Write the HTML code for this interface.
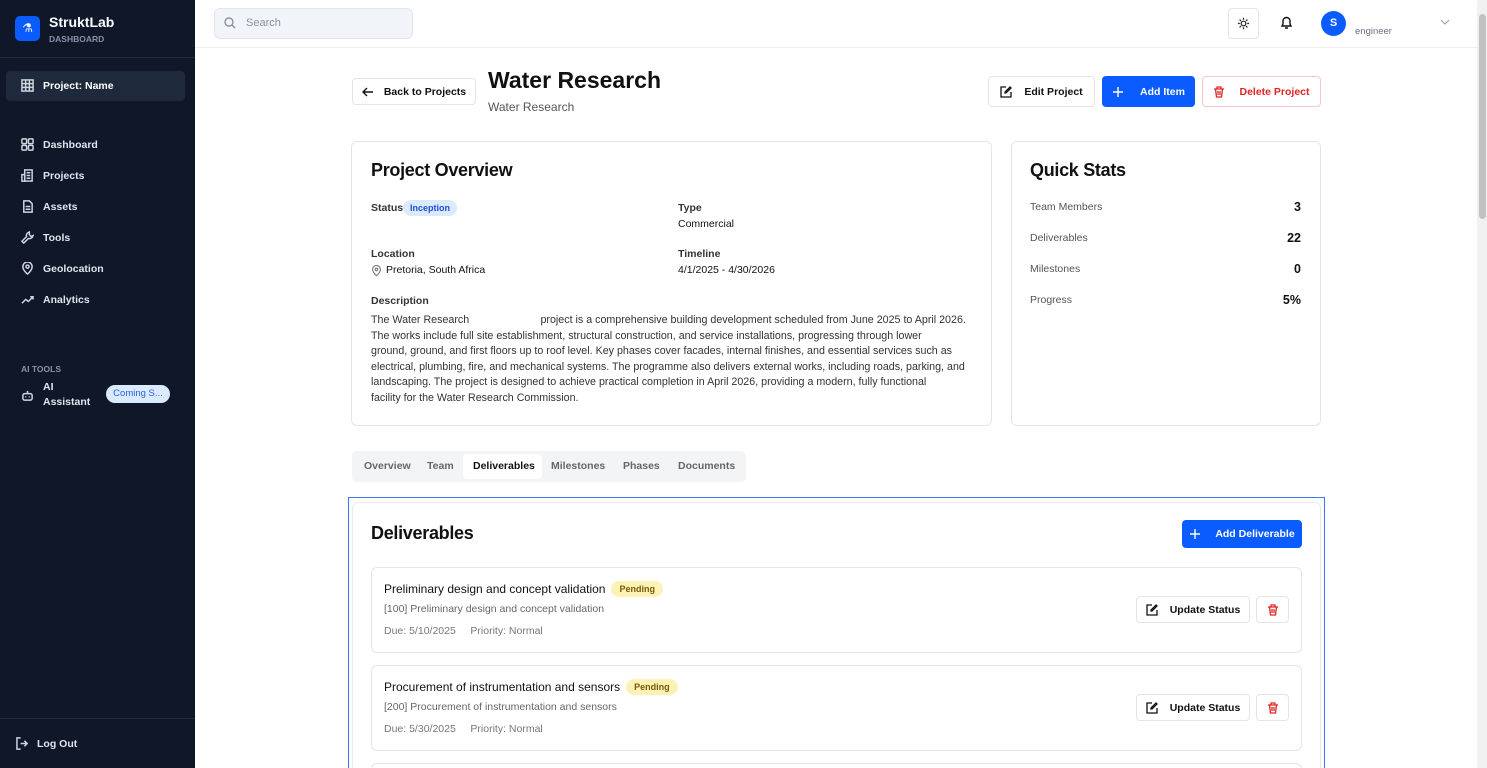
<!DOCTYPE html>
<html style="width:1487px;height:768px;overflow:hidden"><head><meta charset="utf-8"><style>
*{box-sizing:border-box;margin:0;padding:0}
body{width:1487px;height:768px;overflow:hidden;font-family:"Liberation Sans",Arial,sans-serif;background:#fff;position:relative;color:#111}
.sb{position:absolute;left:0;top:0;width:195px;height:768px;background:#0f1729;color:#e5e9f0}
.abs{position:absolute}
.nav{position:absolute;left:21px;font-size:10.5px;font-weight:bold;color:#dfe4ec;display:flex;align-items:center;gap:9px}
.nav svg{width:13px;height:13px}
.btn{position:absolute;border:1px solid #e2e4e8;border-radius:4px;background:#fff;font-size:10.5px;font-weight:bold;display:flex;align-items:center;justify-content:center;gap:12px}
.btn svg{width:12px;height:12px}
.card{position:absolute;border:1px solid #e3e5e8;border-radius:6px;background:#fff}
.lab{font-size:10.5px;font-weight:bold;color:#333;position:absolute}
.val{font-size:10.5px;color:#111;position:absolute}
.row{position:absolute;left:371px;width:931px;height:86px;border:1px solid #e3e5e8;border-radius:6px}
.pend{display:inline-block;background:#fdf2b5;color:#7a5a06;font-size:9px;font-weight:bold;padding:3px 8px;border-radius:9px;margin-left:6px;vertical-align:1px}
</style></head><body>
<div class="sb">
 <div class="abs" style="left:15px;top:16px;width:25px;height:25px;background:#0a5cff;border-radius:5px;color:#fff;font-size:12px;text-align:center;line-height:25px">⚗</div>
 <div class="abs" style="left:49px;top:14px;font-size:14px;font-weight:bold;color:#fff">StruktLab</div>
 <div class="abs" style="left:49px;top:34px;font-size:8.5px;font-weight:bold;color:#8793a8">DASHBOARD</div>
 <div class="abs" style="left:0;top:57px;width:195px;height:1px;background:#1f2a3d"></div>
 <div class="abs" style="left:6px;top:71px;width:179px;height:30px;background:#1e293b;border-radius:4px"></div>
 <div class="nav" style="top:79px"><svg viewBox="0 0 14 14" fill="none" stroke="#cfd5df" stroke-width="1.6"><rect x="1" y="1" width="12" height="12"/><path d="M1 5h12M1 9h12M5 1v12M9 1v12"/></svg><span style="color:#fff">Project: Name</span></div>
 <div class="nav" style="top:138px"><svg viewBox="0 0 14 14" fill="none" stroke="#cfd5df" stroke-width="1.6"><rect x="1" y="1" width="5" height="5" rx="1"/><rect x="8" y="1" width="5" height="5" rx="1"/><rect x="1" y="8" width="5" height="5" rx="1"/><rect x="8" y="8" width="5" height="5" rx="1"/></svg>Dashboard</div>
 <div class="nav" style="top:169px"><svg viewBox="0 0 14 14" fill="none" stroke="#cfd5df" stroke-width="1.6"><rect x="4" y="1" width="8" height="12"/><path d="M1 6h3v7H1zM6 4h4M6 7h4M6 10h4"/></svg>Projects</div>
 <div class="nav" style="top:200px"><svg viewBox="0 0 14 14" fill="none" stroke="#cfd5df" stroke-width="1.6"><path d="M3 1h6l3 3v9H3zM5 7h5M5 10h5"/></svg>Assets</div>
 <div class="nav" style="top:231px"><svg viewBox="0 0 14 14" fill="none" stroke="#cfd5df" stroke-width="1.6"><path d="M9 1a4 4 0 0 0-3 5L1 11l2 2 5-5a4 4 0 0 0 5-3l-2 1-2-2z"/></svg>Tools</div>
 <div class="nav" style="top:262px"><svg viewBox="0 0 14 14" fill="none" stroke="#cfd5df" stroke-width="1.6"><path d="M7 13s5-4 5-8a5 5 0 0 0-10 0c0 4 5 8 5 8z"/><circle cx="7" cy="5" r="1.7"/></svg>Geolocation</div>
 <div class="nav" style="top:293px"><svg viewBox="0 0 14 14" fill="none" stroke="#cfd5df" stroke-width="1.6"><path d="M1 11l4-4 3 2 5-5M10 4h3v3"/></svg>Analytics</div>
 <div class="abs" style="left:21px;top:364px;font-size:8.5px;font-weight:bold;color:#8793a8">AI TOOLS</div>
 <div class="nav" style="top:380px"><svg viewBox="0 0 14 14" fill="none" stroke="#cfd5df" stroke-width="1.6"><rect x="2" y="5" width="10" height="7" rx="2"/><path d="M7 2v3M5 8v1M9 8v1"/></svg><span style="line-height:15px">AI<br>Assistant</span></div>
 <div class="abs" style="left:106px;top:385px;width:64px;height:18px;border-radius:9px;background:#dbeafe;color:#2563eb;font-size:9.5px;line-height:18px;text-align:center">Coming S...</div>
 <div class="abs" style="left:0;top:718px;width:195px;height:1px;background:#1f2a3d"></div>
 <div class="nav" style="left:16px;top:737px;gap:8px"><svg viewBox="0 0 14 14" fill="none" stroke="#cfd5df" stroke-width="1.6"><path d="M5 1H1v12h4M9 4l3 3-3 3M12 7H5"/></svg>Log Out</div>
</div>
<div class="abs" style="left:195px;top:47px;width:1282px;height:1px;background:#eceef1"></div>
<div class="abs" style="left:214px;top:8px;width:199px;height:31px;background:#f1f4f8;border:1px solid #e2e6ec;border-radius:6px;font-size:11px;color:#8a93a0;padding:8px 0 0 31px">Search</div>
<svg class="abs" style="left:224px;top:17px" width="12" height="12" viewBox="0 0 12 12" fill="none" stroke="#8a93a0" stroke-width="1.4"><circle cx="5" cy="5" r="4"/><path d="M8 8l3 3"/></svg>
<div class="abs" style="left:1228px;top:8px;width:31px;height:31px;border:1px solid #e2e4e8;border-radius:4px"></div>
<svg class="abs" style="left:1237px;top:17px" width="13" height="13" viewBox="0 0 14 14" fill="none" stroke="#222" stroke-width="1.3"><circle cx="7" cy="7" r="2.5"/><path d="M7 1v2M7 11v2M1 7h2M11 7h2M2.8 2.8l1.4 1.4M9.8 9.8l1.4 1.4M2.8 11.2l1.4-1.4M9.8 4.2l1.4-1.4"/></svg>
<svg class="abs" style="left:1280px;top:16px" width="13" height="14" viewBox="0 0 13 14" fill="none" stroke="#111" stroke-width="1.4"><path d="M2 10h9l-1-2V5a3.5 3.5 0 0 0-7 0v3zM5 12h3"/></svg>
<div class="abs" style="left:1321px;top:11px;width:25px;height:25px;border-radius:50%;background:#0a5cff;color:#fff;font-size:11px;font-weight:bold;text-align:center;line-height:25px">S</div>
<div class="abs" style="left:1355px;top:26px;font-size:9.5px;color:#6b7280">engineer</div>
<svg class="abs" style="left:1440px;top:19px" width="10" height="7" viewBox="0 0 10 7" fill="none" stroke="#9ca3af" stroke-width="1.2"><path d="M1 1l4 4 4-4"/></svg>
<div class="abs" style="left:1477px;top:0;width:10px;height:768px;background:#f1f1f1"></div>
<div class="abs" style="left:1479px;top:14px;width:7px;height:205px;background:#c1c1c1;border-radius:4px"></div>
<div class="btn" style="left:352px;top:78px;width:124px;height:27px;gap:10px"><svg viewBox="0 0 12 12" fill="none" stroke="#111" stroke-width="1.4"><path d="M11 6H1M5 2L1 6l4 4"/></svg>Back to Projects</div>
<div class="abs" style="left:488px;top:67px;font-size:23px;font-weight:bold">Water Research</div>
<div class="abs" style="left:488px;top:100px;font-size:12px;color:#555">Water Research</div>
<div class="btn" style="left:988px;top:76px;width:107px;height:31px"><svg viewBox="0 0 12 12" fill="none" stroke="#111" stroke-width="1.3"><path d="M6 1H1v10h10V6M10 1l1 1-5 5H5V6z"/></svg>Edit Project</div>
<div class="btn" style="left:1102px;top:76px;width:93px;height:31px;background:#0a5cff;border-color:#0a5cff;color:#fff;gap:16px"><svg viewBox="0 0 12 12" fill="none" stroke="#fff" stroke-width="1.4"><path d="M6 1v10M1 6h10"/></svg>Add Item</div>
<div class="btn" style="left:1202px;top:76px;width:119px;height:31px;border-color:#f6c8c8;color:#e02424;gap:14px"><svg viewBox="0 0 12 12" fill="none" stroke="#e02424" stroke-width="1.3"><path d="M1 3h10M4 3V1h4v2M2.5 3l1 8h5l1-8M5 5v4M7 5v4"/></svg>Delete Project</div>
<div class="card" style="left:351px;top:141px;width:641px;height:285px"></div>
<div class="abs" style="left:371px;top:160px;font-size:18px;font-weight:bold;letter-spacing:-0.3px">Project Overview</div>
<div class="lab" style="left:371px;top:202px">Status</div>
<div class="abs" style="left:403px;top:200px;background:#dbeafe;color:#1d4ed8;font-size:9px;font-weight:bold;padding:3px 7px;border-radius:9px">Inception</div>
<div class="lab" style="left:678px;top:202px">Type</div>
<div class="val" style="left:678px;top:218px">Commercial</div>
<div class="lab" style="left:371px;top:248px">Location</div>
<svg class="abs" style="left:371px;top:265px" width="11" height="12" viewBox="0 0 14 14" fill="none" stroke="#777" stroke-width="1.4"><path d="M7 13s5-4 5-8a5 5 0 0 0-10 0c0 4 5 8 5 8z"/><circle cx="7" cy="5" r="1.7"/></svg>
<div class="val" style="left:386px;top:264px">Pretoria, South Africa</div>
<div class="lab" style="left:678px;top:248px">Timeline</div>
<div class="val" style="left:678px;top:264px">4/1/2025 - 4/30/2026</div>
<div class="lab" style="left:371px;top:295px">Description</div>
<div class="abs" style="left:371px;top:313px;font-size:10.7px;line-height:15.6px;color:#333;white-space:nowrap">The Water Research &nbsp;&nbsp;&nbsp;&nbsp;&nbsp;&nbsp;&nbsp;&nbsp;&nbsp;&nbsp;&nbsp;&nbsp;&nbsp;&nbsp;&nbsp;&nbsp;&nbsp;&nbsp;&nbsp;&nbsp;&nbsp;&nbsp; project is a comprehensive building development scheduled from June 2025 to April 2026.<br>The works include full site establishment, structural construction, and service installations, progressing through lower<br>ground, ground, and first floors up to roof level. Key phases cover facades, internal finishes, and essential services such as<br>electrical, plumbing, fire, and mechanical systems. The programme also delivers external works, including roads, parking, and<br>landscaping. The project is designed to achieve practical completion in April 2026, providing a modern, fully functional<br>facility for the Water Research Commission.</div>
<div class="card" style="left:1011px;top:141px;width:310px;height:285px"></div>
<div class="abs" style="left:1030px;top:160px;font-size:18px;font-weight:bold;letter-spacing:-0.3px">Quick Stats</div>
<div class="val" style="left:1030px;top:201px;color:#555">Team Members</div><div class="abs" style="left:1240px;top:200px;width:61px;text-align:right;font-size:12.5px;font-weight:bold">3</div>
<div class="val" style="left:1030px;top:232px;color:#555">Deliverables</div><div class="abs" style="left:1240px;top:231px;width:61px;text-align:right;font-size:12.5px;font-weight:bold">22</div>
<div class="val" style="left:1030px;top:263px;color:#555">Milestones</div><div class="abs" style="left:1240px;top:262px;width:61px;text-align:right;font-size:12.5px;font-weight:bold">0</div>
<div class="val" style="left:1030px;top:294px;color:#555">Progress</div><div class="abs" style="left:1240px;top:293px;width:61px;text-align:right;font-size:12.5px;font-weight:bold">5%</div>
<div class="abs" style="left:352px;top:451px;width:394px;height:31px;background:#f3f4f6;border-radius:5px"></div>
<div class="abs" style="left:463px;top:454px;width:79px;height:25px;background:#fff;border-radius:4px"></div>
<div class="abs" style="top:460px;left:364px;font-size:10.5px;color:#666;font-weight:bold">Overview</div>
<div class="abs" style="top:460px;left:427px;font-size:10.5px;color:#666;font-weight:bold">Team</div>
<div class="abs" style="top:460px;left:473px;font-size:10.5px;color:#111;font-weight:bold">Deliverables</div>
<div class="abs" style="top:460px;left:551px;font-size:10.5px;color:#666;font-weight:bold">Milestones</div>
<div class="abs" style="top:460px;left:623px;font-size:10.5px;color:#666;font-weight:bold">Phases</div>
<div class="abs" style="top:460px;left:678px;font-size:10.5px;color:#666;font-weight:bold">Documents</div>
<div class="abs" style="left:348px;top:497px;width:977px;height:271px;border:1.5px solid #3b76f0;border-bottom:none;overflow:hidden">
 <div class="abs" style="left:3px;top:4px;width:969px;height:300px;border:1px solid #e8eaed;border-radius:6px"></div>
 <div class="abs" style="left:22px;top:265px;width:931px;height:86px;border:1px solid #e3e5e8;border-radius:6px"></div>
</div>
<div class="abs" style="left:371px;top:523px;font-size:18px;font-weight:bold;letter-spacing:-0.3px">Deliverables</div>
<div class="btn" style="left:1182px;top:520px;width:120px;height:28px;background:#0a5cff;border-color:#0a5cff;color:#fff;gap:14px"><svg viewBox="0 0 12 12" fill="none" stroke="#fff" stroke-width="1.4"><path d="M6 1v10M1 6h10"/></svg>Add Deliverable</div>
<div class="row" style="top:567px"></div>
<div class="abs" style="left:384px;top:581px;font-size:12px">Preliminary design and concept validation<span class="pend">Pending</span></div>
<div class="abs" style="left:384px;top:603px;font-size:10.5px;color:#666">[100] Preliminary design and concept validation</div>
<div class="abs" style="left:384px;top:625px;font-size:10.5px;color:#777">Due: 5/10/2025 &nbsp;&nbsp;&nbsp; Priority: Normal</div>
<div class="btn" style="left:1136px;top:596px;width:114px;height:27px"><svg viewBox="0 0 12 12" fill="none" stroke="#111" stroke-width="1.3"><path d="M6 1H1v10h10V6M10 1l1 1-5 5H5V6z"/></svg>Update Status</div>
<div class="btn" style="left:1256px;top:596px;width:33px;height:27px"><svg viewBox="0 0 12 12" fill="none" stroke="#e02424" stroke-width="1.3"><path d="M1 3h10M4 3V1h4v2M2.5 3l1 8h5l1-8M5 5v4M7 5v4"/></svg></div>
<div class="row" style="top:665px"></div>
<div class="abs" style="left:384px;top:679px;font-size:12px">Procurement of instrumentation and sensors<span class="pend">Pending</span></div>
<div class="abs" style="left:384px;top:701px;font-size:10.5px;color:#666">[200] Procurement of instrumentation and sensors</div>
<div class="abs" style="left:384px;top:723px;font-size:10.5px;color:#777">Due: 5/30/2025 &nbsp;&nbsp;&nbsp; Priority: Normal</div>
<div class="btn" style="left:1136px;top:694px;width:114px;height:27px"><svg viewBox="0 0 12 12" fill="none" stroke="#111" stroke-width="1.3"><path d="M6 1H1v10h10V6M10 1l1 1-5 5H5V6z"/></svg>Update Status</div>
<div class="btn" style="left:1256px;top:694px;width:33px;height:27px"><svg viewBox="0 0 12 12" fill="none" stroke="#e02424" stroke-width="1.3"><path d="M1 3h10M4 3V1h4v2M2.5 3l1 8h5l1-8M5 5v4M7 5v4"/></svg></div>
</body></html>
